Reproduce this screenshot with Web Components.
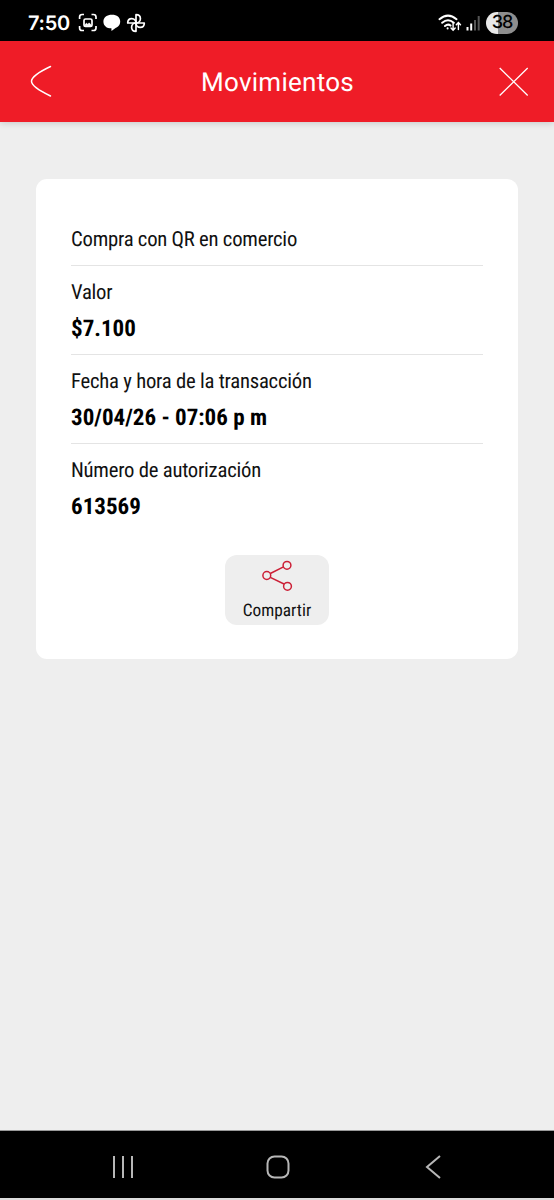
<!DOCTYPE html>
<html lang="es">
<head>
<meta charset="utf-8">
<title>Movimientos</title>
<style>
html,body{margin:0;height:100%;background:#eee;text-rendering:geometricPrecision}
</style>
</head>
<body>
<movement-screen></movement-screen>
<script>
const define = (name, html) => customElements.define(name, class extends HTMLElement {
  constructor() {
    super();
    const t = document.createElement('template');
    t.innerHTML = html;
    this.attachShadow({mode: 'open'}).append(t.content.cloneNode(true));
  }
});

define('status-bar', `
<style>
:host{display:flex;box-sizing:border-box;height:41px;background:#000;color:#fff;align-items:center;justify-content:space-between;padding:4px 36px 0 28px}
.time{font:600 20px/24px Inter,sans-serif;width:42px;white-space:nowrap;letter-spacing:-.3px}
.group{display:flex;align-items:center}
svg{display:block;fill:none}
.battery{width:32px;height:22px;border-radius:11px;background:linear-gradient(90deg,#e8e8e8 0 12px,#8e8e8e 12px);color:#000;font:500 18px/22px Inter,sans-serif;text-align:center;letter-spacing:-1px;text-indent:0}
</style>
<div class="group">
  <span class="time">7:50</span>
  <svg width="76" height="20" viewBox="0 0 76 20" stroke="#fff" stroke-width="1.7" style="margin-left:8px">
    <path d="M1.600 6V4q0-2.500 2.500-2.500H6M13.500 1.500h2q2.500 0 2.500 2.500v2M18 13v2q0 2.500-2.500 2.500h-2M6 17.500H4Q1.600 17.500 1.600 15v-2"/>
    <rect x="6" y="6" width="8" height="7.500" rx="1.500"/>
    <path d="M6.200 12.800l2.200-2.600 1.500 1.300 1.300-1.600 2.600 3z" fill="#fff" stroke-width=".8"/>
    <path d="M34 1.700c5 0 8.200 2.600 8.200 6.700 0 3.600-2.500 5.600-4.300 6.300L33.500 18l-.1-2.700c-4.700 0-8-2.500-8-6.900 0-4.100 3.600-6.700 8.600-6.700z" fill="#fff" stroke="none"/>
    <g stroke-width="1.700" stroke-linejoin="round" transform="translate(1 0)">
      <path d="M57 10V1.700c3.100 0 4.400 2 4.400 4.100 0 2.400-2 4.200-4.400 4.200z"/>
      <path d="M57 10h8.300c0 3.100-2 4.400-4.100 4.400-2.400 0-4.200-2-4.200-4.400z"/>
      <path d="M57 10v8.300c-3.100 0-4.400-2-4.400-4.100 0-2.400 2-4.200 4.400-4.200z"/>
      <path d="M57 10h-8.300c0-3.100 2-4.400 4.100-4.400 2.400 0 4.200 2 4.200 4.400z"/>
    </g>
  </svg>
</div>
<div class="group">
  <svg width="48" height="20" viewBox="0 0 48 20">
    <g stroke="#fff" stroke-width="2" stroke-linecap="round">
      <path d="M1.500 6.200q8.500-7.200 17 0M4.200 9.800q5.800-5 11.600 0M7 13q3-2.500 5.500-.4"/>
      <path d="M9.600 15.200v.2"/>
      <path stroke-width="1.400" d="M15.100 10v7M13 15l2.100 2.200 2.100-2.200M20.400 16.500v-6.800M18.300 11.700l2.100-2.200 2.100 2.200"/>
    </g>
    <g><rect x="28.500" y="14" width="2" height="3.500" fill="#fff"/><rect x="32.200" y="10.500" width="2" height="7" fill="#fff"/><rect x="36" y="7" width="2" height="10.500" fill="#555"/><rect x="39.700" y="3" width="2" height="14.500" fill="#555"/></g>
  </svg>
  <div class="battery">38</div>
</div>`);

define('app-header', `
<style>
:host{display:grid;grid-template-columns:70px 1fr 70px;align-items:center;height:81px;background:#ef1c27;color:#fff;box-shadow:0 1px 7px rgba(0,0,0,.17)}
h1{margin:2px 0 0 1px;font:400 26px/32px Roboto,sans-serif;text-align:center;letter-spacing:.25px}
svg{display:block;fill:none;stroke:#fff}
</style>
<svg width="70" height="81" viewBox="0 0 70 81" stroke-width="1.500" stroke-linecap="round"><path d="M50.500 25.500C41 30 31.500 35.500 31.500 40.300S41 50.500 50.500 55"/></svg>
<h1><slot></slot></h1>
<svg width="70" height="81" viewBox="0 0 70 81" stroke-width="1.300"><path d="M15.700 27l28 27.500M43.700 27l-28 27.500"/></svg>`);

define('detail-row', `
<style>
:host{display:block;border-top:1px solid #e4e4e4;padding:15px 0 11px;color:#111}
div{white-space:nowrap;font-family:"Roboto Condensed",Roboto,sans-serif;font-stretch:75%}
.label{font-size:20.700px;line-height:24px;letter-spacing:-.23px}
.value{margin-top:10px;font-size:23px;line-height:28px;font-weight:700;color:#000;letter-spacing:.01px}
</style>
<div class="label"><slot name="label"></slot></div>
<div class="value"><slot></slot></div>`);

define('share-button', `
<style>
:host{display:flex;flex-direction:column;align-items:center;box-sizing:border-box;width:104px;height:70px;border-radius:12px;background:#eee;color:#111;padding-top:4px}
svg{display:block;fill:none;stroke:#cc1f36;stroke-width:1.500}
span{font:400 17.300px/20px "Roboto Condensed",Roboto,sans-serif;font-stretch:75%;margin-top:8px;letter-spacing:0}
</style>
<svg width="34" height="34" viewBox="0 0 34 34"><path d="M10.300 14.500l13.200-6.700M10.300 18.300l13.700 6.700"/><circle cx="6.800" cy="16.500" r="3.900"/><circle cx="27" cy="6.300" r="3.900"/><circle cx="27.500" cy="27.300" r="3.900"/></svg>
<span><slot></slot></span>`);

define('detail-card', `
<style>
:host{display:flex;flex-direction:column;box-sizing:border-box;height:480px;margin:57px 36px 0;padding:49px 35px 0;background:#fff;border-radius:11px}
.title{font:400 20.700px/24px "Roboto Condensed",Roboto,sans-serif;font-stretch:75%;color:#111;padding-bottom:13px;letter-spacing:-.23px}
.action{display:flex;justify-content:center;margin-top:23px}
</style>
<div class="title"><slot name="title"></slot></div>
<slot></slot>
<div class="action"><slot name="action"></slot></div>`);

define('navigation-bar', `
<style>
:host{display:flex;box-sizing:border-box;height:70px;background:#000;border-top:1px solid #999;border-bottom:2px solid #ddd;justify-content:space-between;align-items:center;padding:4px 106px 0 108px}
svg{display:block;fill:none;stroke:#b7b7b7;stroke-width:2}
</style>
<svg width="30" height="30"><path d="M6 4v22M15 4v22M24 4v22"/></svg>
<svg width="30" height="30"><rect x="4.500" y="4.500" width="21" height="21" rx="7"/></svg>
<svg width="30" height="30"><path d="M22 4L9 15l13 11"/></svg>`);

define('movement-screen', `
<style>
:host{display:flex;flex-direction:column;height:1200px;background:#eee}
main{flex:1}
</style>
<status-bar></status-bar>
<app-header>Movimientos</app-header>
<main>
<detail-card>
  <span slot="title">Compra con QR en comercio</span>
  <detail-row><span slot="label">Valor</span>$7.100</detail-row>
  <detail-row><span slot="label">Fecha y hora de la transacción</span>30/04/26 - 07:06 p m</detail-row>
  <detail-row><span slot="label">Número de autorización</span>613569</detail-row>
  <share-button slot="action">Compartir</share-button>
</detail-card>
</main>
<navigation-bar></navigation-bar>`);
</script>
</body>
</html>
